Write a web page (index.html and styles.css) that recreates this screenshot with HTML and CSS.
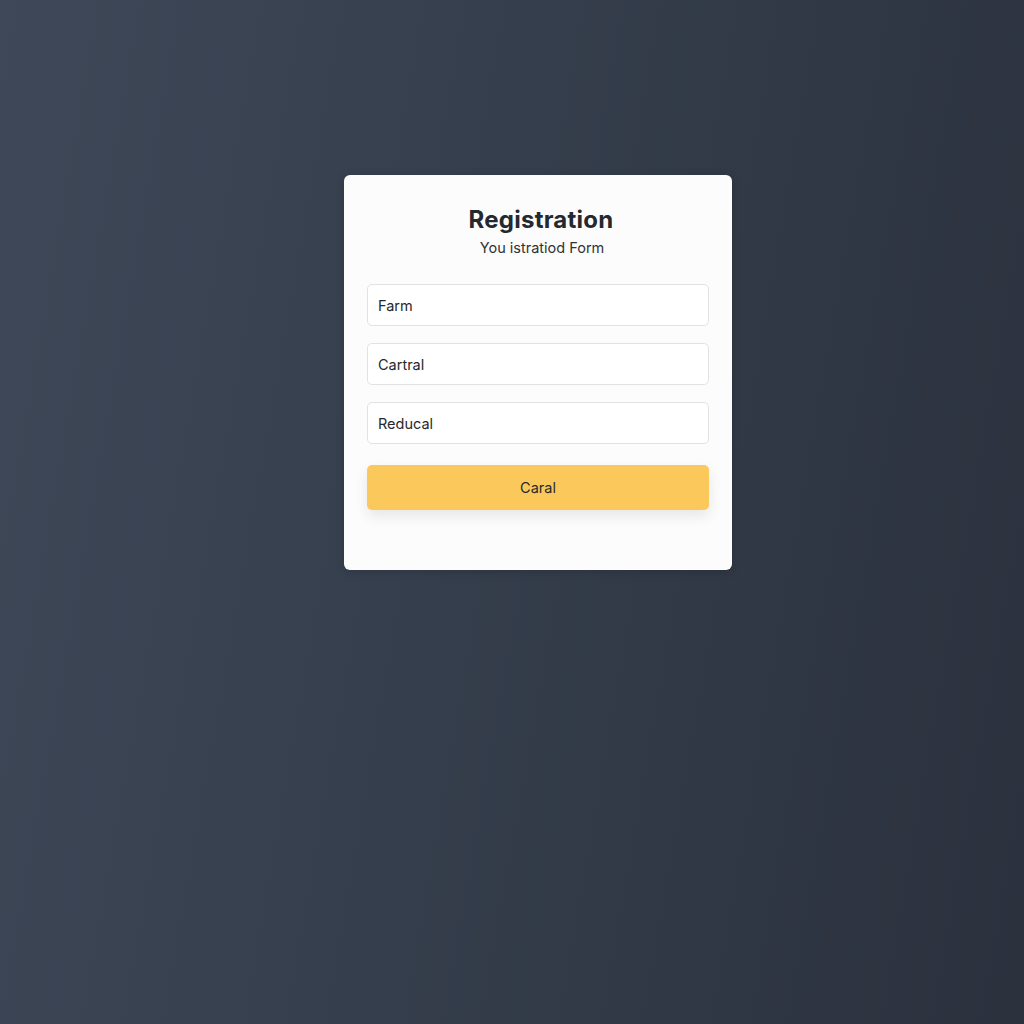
FILE: index.html
```html
<!DOCTYPE html>
<html lang="en">
<head>
<meta charset="utf-8">
<title>Registration</title>
<link rel="stylesheet" href="styles.css">
</head>
<body>
<main class="page">
  <form class="card">
    <h1 class="title">Registration</h1>
    <p class="subtitle">You istratiod Form</p>
    <div class="fields">
      <div class="field">Farm</div>
      <div class="field">Cartral</div>
      <div class="field">Reducal</div>
    </div>
    <button type="button" class="btn">Caral</button>
  </form>
</main>
</body>
</html>
```

FILE: styles.css
```css
* { box-sizing: border-box; }
html, body { margin: 0; height: 100%; }
body {
  background: linear-gradient(100deg, #3e4858 0%, #353e4c 45%, #2b313d 100%);
  font-family: Inter, "Noto Sans", "Liberation Sans", sans-serif;
}
.page {
  padding-top: 175px;
  padding-left: 344px;
}
.card {
  width: 388px;
  height: 395px;
  background: #fcfcfc;
  border-radius: 6px;
  padding: 30px 23px 0 23px;
  display: flex;
  flex-direction: column;
  box-shadow: 0 2px 10px rgba(0,0,0,0.15);
}
.title {
  margin: 0;
  text-align: center;
  font-size: 24px;
  line-height: 30px;
  font-weight: 700;
  color: #25282e;
  letter-spacing: 0.25px;
  padding-left: 6px;
}
.subtitle {
  margin: 3px 0 0 0;
  text-align: center;
  font-size: 14.5px;
  line-height: 20px;
  color: #2f3236;
  padding-left: 8px;
}
.fields {
  margin-top: 26px;
  display: flex;
  flex-direction: column;
  gap: 17px;
}
.field {
  height: 42px;
  border: 1px solid #e1e2e5;
  border-radius: 5px;
  background: #fff;
  padding: 0 10px;
  display: flex;
  align-items: center;
  font-size: 14.5px;
  color: #26282c;
}
.btn {
  margin-top: 21px;
  height: 45px;
  border: none;
  border-radius: 5px;
  background: #fbc95b;
  font-family: inherit;
  font-size: 14.5px;
  color: #2a2a2a;
  box-shadow: 0 6px 14px rgba(0,0,0,0.09);
}
```
